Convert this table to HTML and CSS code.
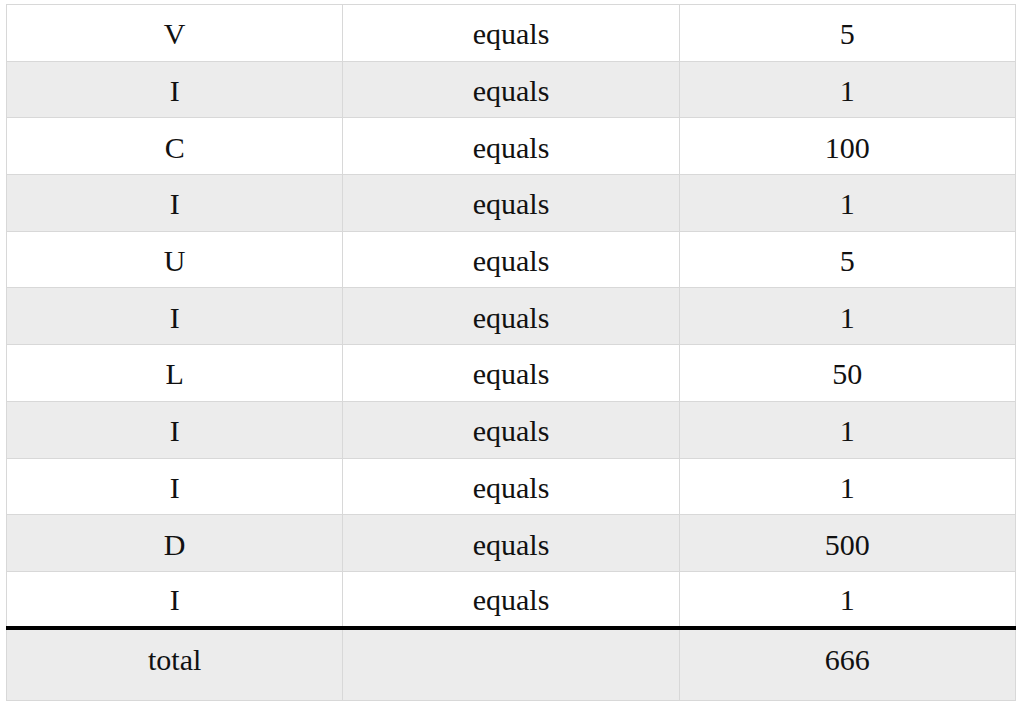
FILE: index.html
```html
<!DOCTYPE html>
<html>
<head>
<meta charset="utf-8">
<link rel="stylesheet" href="styles.css">
</head>
<body>
<table class="tally">
<tbody>
<tr><td>V</td><td>equals</td><td>5</td></tr>
<tr><td>I</td><td>equals</td><td>1</td></tr>
<tr><td>C</td><td>equals</td><td>100</td></tr>
<tr><td>I</td><td>equals</td><td>1</td></tr>
<tr><td>U</td><td>equals</td><td>5</td></tr>
<tr><td>I</td><td>equals</td><td>1</td></tr>
<tr><td>L</td><td>equals</td><td>50</td></tr>
<tr><td>I</td><td>equals</td><td>1</td></tr>
<tr><td>I</td><td>equals</td><td>1</td></tr>
<tr><td>D</td><td>equals</td><td>500</td></tr>
<tr><td>I</td><td>equals</td><td>1</td></tr>
</tbody>
<tfoot>
<tr class="total"><td>total</td><td></td><td>666</td></tr>
</tfoot>
</table>
</body>
</html>
```
FILE: styles.css
```css
html, body {
  margin: 0;
  padding: 0;
  background: #fff;
}
body {
  padding: 4px 8px 0 6px;
}
.tally {
  width: 1010px;
  border-collapse: collapse;
  table-layout: fixed;
  font-family: "Liberation Serif", "Times New Roman", serif;
  font-size: 30px;
  color: #111;
}
.tally td {
  border: 1px solid #d8d8d8;
  height: 56.7px;
  padding: 3px 0 0;
  text-align: center;
  vertical-align: middle;
  box-sizing: border-box;
}
.tally tbody tr:nth-child(even) td {
  background: #ececec;
}
.tally .total td {
  background: #ececec;
  border-top: 4px solid #000;
  height: 72px;
  padding: 0 0 10px;
}
```
